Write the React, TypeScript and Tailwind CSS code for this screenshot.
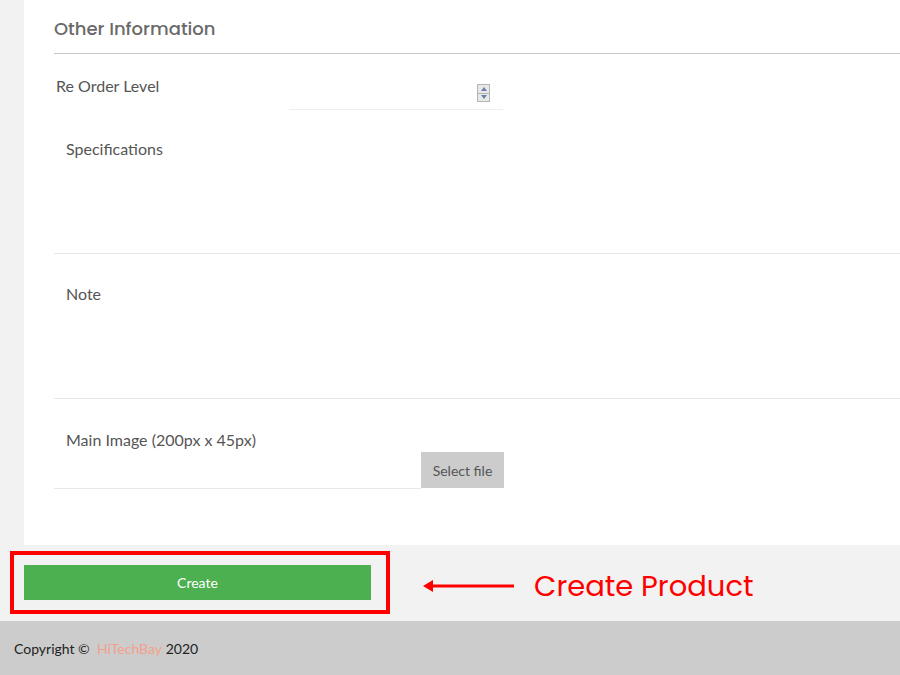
export default function App() {
  return (
    <div className="w-[900px] h-[675px] overflow-hidden bg-[#f2f2f2] flex flex-col font-['Lato','Liberation_Sans',sans-serif]">
      <div className="flex h-[545px]">
        <div className="w-[24px] shrink-0" />
        <div className="flex-1 bg-white pl-[30px] flex flex-col">
          <h2 className="h-[54px] pt-[17px] text-[18px] leading-[24px] font-medium text-[#6a6a6a] font-['Poppins','Open_Sans',sans-serif] border-b border-[#c8c8c8]">
            Other Information
          </h2>

          <div className="relative h-[58px]">
            <span className="absolute left-[2px] top-[22px] text-[16px] leading-[20px] text-[#555]">Re Order Level</span>
            <div className="absolute left-[235px] top-[27px] w-[214px] h-[29px] border-b border-[#eee]">
              <div className="absolute right-[13px] top-[3px] w-[13px] h-[18px] flex flex-col border border-[#b5b5b5] bg-[#e8e8e8]">
                <div className="flex-1 flex items-center justify-center border-b border-[#b5b5b5]">
                  <div className="w-0 h-0 border-l-[3px] border-r-[3px] border-b-[4px] border-l-transparent border-r-transparent border-b-[#6b7fa8]" />
                </div>
                <div className="flex-1 flex items-center justify-center">
                  <div className="w-0 h-0 border-l-[3px] border-r-[3px] border-t-[4px] border-l-transparent border-r-transparent border-t-[#6b7fa8]" />
                </div>
              </div>
            </div>
          </div>

          <div className="h-[142px] border-b border-[#e8e8e8] pl-[12px] pt-[25px]">
            <span className="text-[16px] leading-[20px] text-[#555]">Specifications</span>
          </div>

          <div className="h-[145px] border-b border-[#e8e8e8] pl-[12px] pt-[28px]">
            <span className="text-[16px] leading-[20px] text-[#555]">Note</span>
          </div>

          <div className="relative h-[90px]">
            <span className="absolute left-[12px] top-[31px] text-[16px] leading-[20px] text-[#555]">Main Image (200px x 45px)</span>
            <div className="absolute left-0 top-[89px] w-[367px] border-b border-[#e8e8e8]" />
            <button className="absolute left-[367px] top-[53px] w-[83px] h-[36px] bg-[#cccccc] text-[14px] text-[#555]">
              Select file
            </button>
          </div>
        </div>
      </div>

      <div className="h-[76px] flex items-center">
        <div className="ml-[10px] mt-[-1px] w-[380px] h-[63px] border-[4px] border-[#ff0000] pl-[10px] pt-[10px]">
          <button className="w-[347px] h-[35px] bg-[#4caf50] text-white text-[14px]">Create</button>
        </div>
        <div className="ml-[33px] mt-[6px] flex items-center">
          <svg width="92" height="14" viewBox="0 0 92 14">
            <polygon points="0,7 10,1 10,13" fill="#ff0000" />
            <rect x="8" y="5.5" width="83" height="3" fill="#ff0000" />
          </svg>
          <span className="ml-[19px] text-[29px] leading-[36px] text-[#ff0000] font-['Poppins','Open_Sans',sans-serif]">
            Create Product
          </span>
        </div>
      </div>

      <div className="h-[54px] bg-[#cccccc] flex items-center pl-[14px] text-[14px] text-[#222]">
        Copyright ©&nbsp;&nbsp;<span className="text-[#f4a08a]">HiTechBay</span>&nbsp;2020
      </div>
    </div>
  );
}
